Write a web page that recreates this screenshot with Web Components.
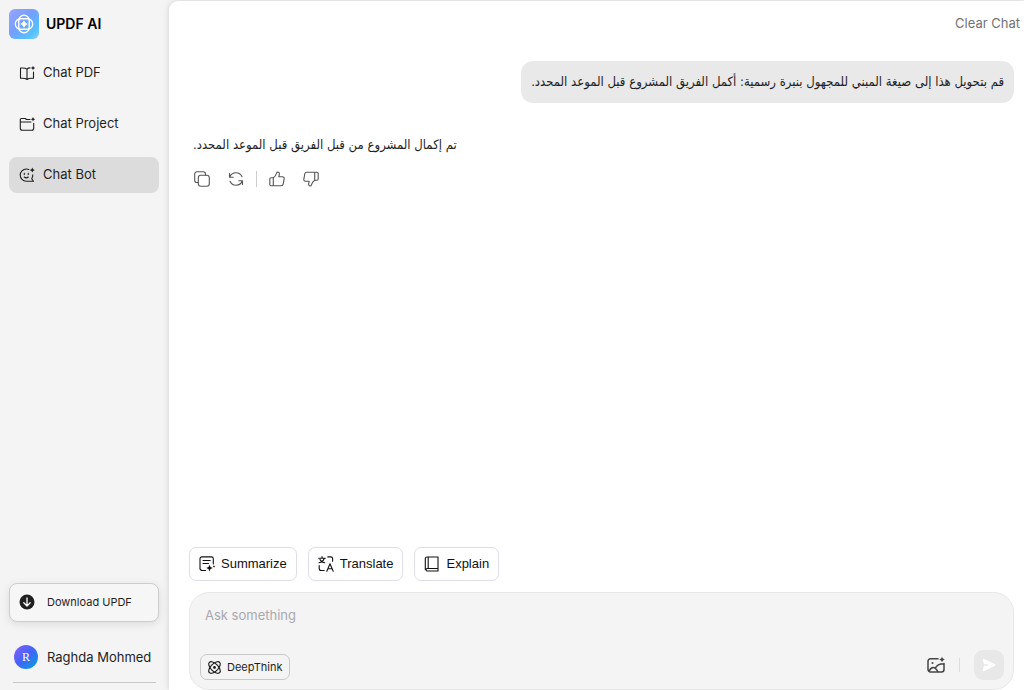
<!DOCTYPE html>
<html lang="en">
<head>
<meta charset="utf-8">
<title>UPDF AI</title>
<style>
body { margin: 0; background: #f4f4f4; color: #1f1f1f; font-family: Inter, "Liberation Sans", sans-serif; font-size: 13px; line-height: 20px; }
</style>
</head>
<body>
<updf-app></updf-app>

<script>
const icons = {
  book: '<svg viewBox="0 0 16 16"><path d="M8 4.2v10M8 4.2C7 3 5 2.8 1.5 3v10.3c3-.3 5.200 0 6.500 1.200 1.300-1.200 3.500-1.500 6.500-1.200V7M8 4.200C8.900 3.200 9.700 2.900 11 2.900"/><path class="f" d="m14 .8.7 1.500 1.500.7-1.500.7-.7 1.500-.7-1.500-1.500-.7 1.500-.7z"/></svg>',
  folder: '<svg viewBox="0 0 16 16"><path d="M11 3.500H7.500L6.300 2.500H2.500a1.200 1.200 0 0 0-1.200 1.200v8.500a2 2 0 0 0 2 2h9.400a2 2 0 0 0 2-2V7.300M1.300 6H12"/><path class="f" d="m14 1 .7 1.500 1.500.7-1.500.7-.7 1.500-.7-1.500-1.500-.7 1.500-.7z"/></svg>',
  bot: '<svg viewBox="0 0 16 16"><path d="M9.800 2.500A6 6 0 0 0 7.300 2a6 6 0 0 0 0 12.200h7.200l-1.800-2.500Q13.800 10 13.800 7.700M5.300 6.200v1.300M9.300 6.200v1.300M5.300 10q2 1.800 4 0"/><path class="f" d="m13.300.6.8 1.700 1.700.8-1.700.8-.8 1.700-.8-1.700-1.700-.8 1.700-.8z"/></svg>',
  down: '<svg viewBox="0 0 16 16"><circle class="f" cx="8" cy="8" r="7.500"/><path d="M8 4v8M4.800 8.800 8 12l3.200-3.200" style="stroke:#fff;stroke-width:1.300"/></svg>',
  copy: '<svg viewBox="0 0 16 16"><rect x="4.300" y="4.300" width="11" height="11" rx="2.500"/><path d="M4.300 11.500H3A2.300 2.300 0 0 1 .7 9.200V3A2.300 2.300 0 0 1 3 .7h6.200A2.300 2.300 0 0 1 11.500 3v1.300"/></svg>',
  refresh: '<svg viewBox="0 0 16 16"><path d="M1.500 2.500v3.700h3.700M1.800 6A6.600 6.600 0 0 1 14 5.700M14.500 13.500V9.800h-3.700M14.200 10A6.600 6.600 0 0 1 2 10.300"/></svg>',
  thumb: '<svg viewBox="0 0 16 16"><path d="M4.300 6.800H2A1.200 1.200 0 0 0 .8 8v5.500A1.300 1.300 0 0 0 2 14.800h10.200a2 2 0 0 0 2-1.600l1-5.500a1.700 1.700 0 0 0-1.700-2h-3.700l.6-2.600C10.800 1.500 8.500.2 7.700 1.800 6.800 4.500 6 5.700 4.300 6.800zM4.300 6.800v8"/></svg>',
  summary: '<svg viewBox="0 0 16 16"><path d="M6.500 14.500h-4L1 13V2.700A1.800 1.800 0 0 1 2.800.9h9.700a1.800 1.800 0 0 1 1.800 1.800V8M4 4.500h7.200M4 7.500h5.500"/><path class="f" d="m10.500 8.800 1 2.300 2.300 1-2.300 1-1 2.300-1-2.300-2.300-1 2.300-1zm4.500.5.4.8.8.4-.8.400-.4.800-.4-.8-.8-.4.8-.4z"/></svg>',
  translate: '<svg viewBox="0 0 16 16"><path d="M.8 2.200h6.500M4 .5v1.700M2 3.500q1.500 3 4.700 3.200M6.200 2.500Q5 6 1 6.800M9.800.9h2.900a1.900 1.900 0 0 1 1.900 1.900v2.500M1.200 9.500v3a2 2 0 0 0 2 2h3M8.800 15.300l3.200-7.500 3.200 7.500M9.900 12.800h4.200"/></svg>',
  explain: '<svg viewBox="0 0 16 16"><path d="M3 1h11v11.500H3A1.300 1.300 0 0 0 3 15h11v-2.500M1.300 13.500V2.600A1.700 1.700 0 0 1 3 1M4.200 1v11.500"/></svg>',
  atom: '<svg viewBox="0 0 16 16"><ellipse cx="8" cy="8" rx="9" ry="4.500" transform="rotate(45 8 8)" style="stroke-width:1.500"/><ellipse cx="8" cy="8" rx="9" ry="4.500" transform="rotate(-45 8 8)" style="stroke-width:1.500"/><circle class="f" cx="8" cy="8" r="1.700"/></svg>',
  image: '<svg viewBox="0 0 18 18"><path d="M11 2.700H3.500A2.500 2.500 0 0 0 1 5.200v8.300A2.500 2.500 0 0 0 3.500 16h11a2.500 2.500 0 0 0 2.500-2.500V7.500M2 15.200C4.300 11 7.500 9.500 10.800 15.700M8.300 12.200q2.200-4.700 8.700-4.500" style="stroke-width:1.500"/><circle class="f" cx="5.500" cy="7" r="1"/><path class="f" d="m15 .7.9 1.900 1.900.9-1.900.9-.9 1.900-.9-1.900-1.900-.9 1.900-.9z"/></svg>',
  send: '<svg viewBox="0 0 14 14"><path class="f" d="M1.700.8 13 6.200q1 .8 0 1.600L1.700 13.200Q.6 13.400.8 12.200L2 7.700h4V6.300H2L.8 1.800Q.6.600 1.700.8z"/></svg>',
  logo: '<svg viewBox="0 0 30 30"><defs><linearGradient id="g" x1="0" y1="0" x2="1" y2="1"><stop stop-color="#9aa4ff"/><stop offset=".45" stop-color="#739fff"/><stop offset=".8" stop-color="#55c2fb"/><stop offset="1" stop-color="#8ccfff"/></linearGradient></defs><rect width="30" height="30" rx="6" fill="url(#g)" stroke="none"/><g fill="none" stroke="#fff" stroke-width="1.400"><rect x="9.800" y="6.300" width="10.400" height="17.400" rx="5.200"/><rect x="6.300" y="9.800" width="17.400" height="10.400" rx="5.200"/></g><path d="M15 12.300q.7 2 2.700 2.700-2 .7-2.700 2.700-.7-2-2.700-2.700 2-.7 2.700-2.700z" fill="#fff" stroke="#fff"/></svg>'
};

function define(name, css, html) {
  const template = document.createElement('template');
  template.innerHTML = `<style>*{box-sizing:border-box}button,textarea{font:inherit;color:inherit}button{cursor:pointer}a{color:inherit;text-decoration:none}${css}</style>${html}`;
  customElements.define(name, class extends HTMLElement {
    constructor() {
      super();
      this.attachShadow({ mode: 'open' }).append(template.content.cloneNode(true));
    }
  });
}

customElements.define('updf-icon', class extends HTMLElement {
  connectedCallback() {
    const root = this.shadowRoot || this.attachShadow({ mode: 'open' });
    root.innerHTML = `<style>
      :host{display:block;flex:none;width:var(--icon-size,16px);height:var(--icon-size,16px)}
      svg{display:block;width:100%;height:100%;overflow:visible;fill:none;stroke:currentColor;stroke-width:1.1;stroke-linecap:round;stroke-linejoin:round}
      .f{fill:currentColor;stroke:none}
    </style>${icons[this.getAttribute('name')]}`;
  }
});

define('nav-link', `
  :host{display:block}
  a{display:flex;align-items:center;gap:8px;height:36px;padding:0 10px;border-radius:8px;font-size:13px}
  :host([active]) a{background:#dcdcdc}
  span{padding-bottom:2px}
`, `<a href="#"><slot name="icon"></slot><span><slot></slot></span></a>`);

define('download-button', `
  :host{display:block}
  button{display:flex;align-items:center;gap:12px;width:100%;height:39px;padding:0 9px 1px;border:1px solid #cdcdcd;border-radius:8px;background:#f6f6f6;box-shadow:0 2px 8px #0000001a;font-size:11px}
`, `<button type="button"><updf-icon name="down"></updf-icon><slot></slot></button>`);

define('user-profile', `
  :host{display:block;padding:0 3px 0 4px}
  a{display:flex;align-items:center;gap:9px;height:49px;padding:0 0 2px 1px;border-bottom:1px solid #c8c8c8;white-space:nowrap}
  i{display:grid;place-items:center;width:24px;height:24px;border-radius:50%;background:linear-gradient(135deg,#8b5cf6,#4065fa 50%,#00a6d6);color:#fff;font:12px/24px "Liberation Serif",serif}
`, `<a href="#"><i>R</i><slot></slot></a>`);

define('side-bar', `
  :host{display:flex;flex-direction:column;padding:9px 10px 7px 9px}
  header{display:flex;align-items:center;gap:7px;height:30px;font-size:14px;font-weight:600;color:#000;--icon-size:30px}
  nav{display:grid;gap:15px;margin-top:16px}
  footer{display:grid;gap:12px;margin-top:auto}
`, `<header><updf-icon name="logo"></updf-icon>UPDF AI</header>
  <nav>
    <nav-link><updf-icon slot="icon" name="book"></updf-icon>Chat PDF</nav-link>
    <nav-link><updf-icon slot="icon" name="folder"></updf-icon>Chat Project</nav-link>
    <nav-link active><updf-icon slot="icon" name="bot"></updf-icon>Chat Bot</nav-link>
  </nav>
  <footer><download-button>Download UPDF</download-button><user-profile>Raghda Mohmed</user-profile></footer>`);

define('chat-message', `
  :host{display:block;font-family:"DejaVu Sans Condensed","DejaVu Sans",sans-serif;font-size:13px}
  p{margin:0;line-height:22px}
  :host([from=user]){align-self:flex-end;padding:10px;border-radius:12px;background:#e9e9e9}
  :host([from=bot]){align-self:flex-start}
`, `<p dir="rtl" lang="ar"><slot></slot></p>`);

define('message-actions', `
  :host{display:flex;align-items:center;gap:18px;padding-left:1px;color:#555}
  button{display:block;padding:0;border:0;background:none}
  hr{width:1px;height:16px;margin:0 -6px;border:0;background:#ccc}
  .down{transform:rotate(180deg)}
`, `<button type="button" aria-label="Copy"><updf-icon name="copy"></updf-icon></button>
  <button type="button" aria-label="Regenerate"><updf-icon name="refresh"></updf-icon></button><hr>
  <button type="button" aria-label="Like"><updf-icon name="thumb"></updf-icon></button>
  <button type="button" aria-label="Dislike" class="down"><updf-icon name="thumb"></updf-icon></button>`);

define('prompt-button', `
  :host{display:block}
  button{display:flex;align-items:center;gap:6px;height:34px;padding:0 9px;border:1px solid #dedee8;border-radius:7px;background:#fff;font-family:"Liberation Sans",sans-serif;font-size:13px;color:#111}
`, `<button type="button"><slot name="icon"></slot><slot></slot></button>`);

define('chat-composer', `
  :host{display:block}
  form{display:grid;gap:22px;padding:11px 9px 9px 10px;border:1px solid #e8e8e8;border-radius:20px;background:#f4f4f4}
  textarea{display:block;width:100%;height:24px;padding:1px 5px;border:0;outline:0;background:none;resize:none;overflow:hidden;line-height:20px}
  textarea::placeholder{color:#a9a9ae;opacity:1}
  .bar{display:flex;align-items:center;height:30px}
  .think{display:flex;align-items:center;align-self:flex-end;gap:6px;height:26px;padding:0 7px;border:1px solid #c8c8c8;border-radius:7px;background:none;font-size:11px;--icon-size:13px}
  .image{margin-left:auto;padding:0;border:0;background:none;color:#444;--icon-size:18px}
  hr{width:1px;height:14px;margin:0 14px;border:0;background:#ddd}
  .send{display:grid;place-items:center;width:30px;height:30px;padding:0;border:0;border-radius:9px;background:#e8e8e8;color:#fff;--icon-size:14px}
`, `<form>
    <textarea aria-label="Message" placeholder="Ask something"></textarea>
    <div class="bar">
      <button type="button" class="think"><updf-icon name="atom"></updf-icon>DeepThink</button>
      <button type="button" class="image" aria-label="Add image"><updf-icon name="image"></updf-icon></button><hr>
      <button type="submit" class="send" aria-label="Send"><updf-icon name="send"></updf-icon></button>
    </div>
  </form>`);

define('chat-panel', `
  :host{display:flex;flex-direction:column;min-width:0;margin-top:1px;padding:12px 10px 0 20px;border-radius:9px 0 0 0;background:#fff;box-shadow:0 0 6px #00000026}
  .clear{align-self:flex-end;margin-right:-6px;padding:0;border:0;background:none;color:#737373}
  .log{display:flex;flex-direction:column;flex:1;margin-top:28px}
  .reply{display:grid;gap:15px;justify-items:start;margin-top:31px;padding-left:4px}
  .prompts{display:flex;gap:11px;margin-bottom:11px}
`, `<button type="button" class="clear">Clear Chat</button>
  <section class="log">
    <chat-message from="user">قم بتحويل هذا إلى صيغة المبني للمجهول بنبرة رسمية: أكمل الفريق المشروع قبل الموعد المحدد.</chat-message>
    <div class="reply"><chat-message from="bot">تم إكمال المشروع من قبل الفريق قبل الموعد المحدد.</chat-message><message-actions></message-actions></div>
  </section>
  <div class="prompts">
    <prompt-button><updf-icon slot="icon" name="summary"></updf-icon>Summarize</prompt-button>
    <prompt-button><updf-icon slot="icon" name="translate"></updf-icon>Translate</prompt-button>
    <prompt-button><updf-icon slot="icon" name="explain"></updf-icon>Explain</prompt-button>
  </div>
  <chat-composer></chat-composer>`);

define('updf-app', `
  :host{display:grid;grid-template-columns:169px minmax(0,1fr);min-height:100vh;overflow:hidden}
`, `<side-bar></side-bar><chat-panel></chat-panel>`);
</script>
</body>
</html>
